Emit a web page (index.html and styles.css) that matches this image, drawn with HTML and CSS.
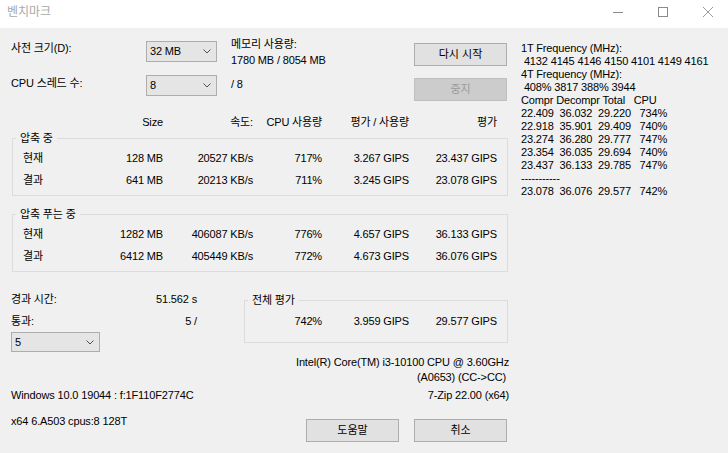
FILE: index.html
```html
<!DOCTYPE html>
<html lang="ko">
    <head>
        <meta charset="UTF-8" />
        <title>벤치마크</title>
        <link rel="stylesheet" href="styles.css">
    </head>
    <body>
        <div class="titlebar">
            <span class="title">벤치마크</span>
            <div class="controls">
                <span class="ctl"><svg width="10" height="10" viewBox="0 0 10 10"><path d="M0 5.5H10" stroke="#8a8a8a" stroke-width="1"/></svg></span>
                <span class="ctl"><svg width="10" height="10" viewBox="0 0 10 10"><rect x="0.5" y="0.5" width="9" height="9" fill="none" stroke="#8a8a8a" stroke-width="1"/></svg></span>
                <span class="ctl"><svg width="10" height="10" viewBox="0 0 10 10"><path d="M0 0L10 10M10 0L0 10" stroke="#9a9a9a" stroke-width="1"/></svg></span>
            </div>
        </div>

        <div class="dialog">
            <div class="main">
                <div class="settings">
                    <label class="lbl-dict">사전 크기(D):</label>
                    <div class="combo combo-dict">32 MB<svg width="8" height="5" viewBox="0 0 8 5"><path d="M0.5 0.5L4 4L7.5 0.5" fill="none" stroke="#505050"/></svg></div>
                    <div class="memory">메모리 사용량:<br>1780 MB / 8054 MB</div>
                    <button class="btn btn-top">다시 시작</button>

                    <label class="lbl-threads">CPU 스레드 수:</label>
                    <div class="combo">8<svg width="8" height="5" viewBox="0 0 8 5"><path d="M0.5 0.5L4 4L7.5 0.5" fill="none" stroke="#505050"/></svg></div>
                    <div class="threads">/ 8</div>
                    <button class="btn btn-stop" disabled>중지</button>
                </div>

                <div class="cols head">
                    <span></span>
                    <span>Size</span>
                    <span>속도:</span>
                    <span>CPU 사용량</span>
                    <span>평가 / 사용량</span>
                    <span>평가</span>
                </div>

                <fieldset class="group">
                    <legend>압축 중</legend>
                    <div class="cols row">
                        <span>현재</span><span>128 MB</span><span>20527 KB/s</span><span>717%</span><span>3.267 GIPS</span><span>23.437 GIPS</span>
                    </div>
                    <div class="cols row">
                        <span>결과</span><span>641 MB</span><span>20213 KB/s</span><span>711%</span><span>3.245 GIPS</span><span>23.078 GIPS</span>
                    </div>
                </fieldset>

                <fieldset class="group group-second">
                    <legend>압축 푸는 중</legend>
                    <div class="cols row">
                        <span>현재</span><span>1282 MB</span><span>406087 KB/s</span><span>776%</span><span>4.657 GIPS</span><span>36.133 GIPS</span>
                    </div>
                    <div class="cols row">
                        <span>결과</span><span>6412 MB</span><span>405449 KB/s</span><span>772%</span><span>4.673 GIPS</span><span>36.076 GIPS</span>
                    </div>
                </fieldset>

                <div class="summary">
                    <div class="passes">
                        <div class="stat"><span>경과 시간:</span><span>51.562 s</span></div>
                        <div class="stat"><span>통과:</span><span>5 /</span></div>
                        <div class="combo combo-pass">5<svg width="8" height="5" viewBox="0 0 8 5"><path d="M0.5 0.5L4 4L7.5 0.5" fill="none" stroke="#505050"/></svg></div>
                    </div>
                    <fieldset class="group group-total">
                        <legend>전체 평가</legend>
                        <div class="total-row">
                            <span>742%</span><span>3.959 GIPS</span><span>29.577 GIPS</span>
                        </div>
                    </fieldset>
                </div>

                <div class="cpu">
                    <div>Intel(R) Core(TM) i3-10100 CPU @ 3.60GHz</div>
                    <div class="cpu-id">(A0653) (CC-&gt;CC)</div>
                </div>

                <div class="foot">
                    <span>Windows 10.0 19044 : f:1F110F2774C</span>
                    <span>7-Zip 22.00 (x64)</span>
                </div>

                <div class="foot foot-last">
                    <span>x64 6.A503 cpus:8 128T</span>
                    <div class="buttons">
                        <button class="btn">도움말</button>
                        <button class="btn">취소</button>
                    </div>
                </div>
            </div>

<pre class="log">1T Frequency (MHz):
 4132 4145 4146 4150 4101 4149 4161
4T Frequency (MHz):
 408% 3817 388% 3944
Compr Decompr Total   CPU
22.409  36.032  29.220   734%
22.918  35.901  29.409   740%
23.274  36.280  29.777   747%
23.354  36.035  29.694   740%
23.437  36.133  29.785   747%
-----------
23.078  36.076  29.577   742%</pre>
        </div>
    </body>
</html>
```

FILE: styles.css
```css
* {
    box-sizing: border-box;
}

body {
    margin: 0;
    font-family: "Liberation Sans", "Noto Sans CJK KR", sans-serif;
    font-size: 11px;
    line-height: 13px;
    letter-spacing: -0.15px;
    color: #000;
    background-color: #f0f0f0;
    height: 453px;
    overflow: hidden;
}

/* title bar */
.titlebar {
    height: 28px;
    background-color: #fff;
    display: flex;
    justify-content: space-between;
    align-items: flex-start;
}

.title {
    padding: 4px 0 0 7px;
    font-size: 12px;
    line-height: 16px;
    letter-spacing: 0;
    color: #a8a8a8;
}

.controls {
    display: flex;
}

.ctl {
    width: 45px;
    height: 28px;
    padding: 7px 0 0 5px;
    display: flex;
    justify-content: center;
    align-items: flex-start;
}

/* dialog body */
.dialog {
    display: flex;
    gap: 12px;
    padding: 10px 0 0 11px;
}

.main {
    width: 498px;
    flex: none;
}

.settings {
    display: grid;
    grid-template-columns: 135px 71px 197px 93px;
    grid-template-rows: 28px 26px;
    row-gap: 9px;
    align-items: start;
}

.lbl-dict {
    margin-top: 4px;
}

.lbl-threads {
    margin-top: 2px;
}

.memory {
    margin-top: -2px;
    padding-left: 14px;
    line-height: 16px;
}

.threads {
    margin-top: 3px;
    padding-left: 14px;
}

.combo {
    height: 21px;
    border: 1px solid #adadad;
    background-color: #e5e5e5;
    padding: 0 5px 0 3px;
    display: flex;
    justify-content: space-between;
    align-items: center;
    line-height: 19px;
}

.combo-dict {
    margin-top: 3px;
}

.combo-pass {
    width: 89px;
    height: 20px;
}

.btn {
    font: inherit;
    line-height: 13px;
    height: 23px;
    width: 93px;
    padding: 0;
    border: 1px solid #adadad;
    background-color: #e1e1e1;
    color: #000;
}

.btn-top {
    margin-top: 5px;
}

.btn-stop {
    margin-top: 3px;
    background-color: #cccccc;
    border-color: #bfbfbf;
    color: #9a9a9a;
}

/* result table */
.cols {
    display: grid;
    grid-template-columns: 80px 60px 90px 69px 87px 88px;
    text-align: right;
}

.cols span:first-child {
    text-align: left;
}

.head {
    margin-top: 15px;
    padding: 0 12px;
}

.group {
    margin: 3px 1px 0;
    padding: 2px 10px 4px;
    border: 1px solid #dcdcdc;
    min-width: 0;
}

.group legend {
    margin-left: -7px;
    padding: 0 4px;
    line-height: 13px;
}

.group-second {
    margin-top: 12px;
}

.row {
    line-height: 22px;
}

/* summary */
.summary {
    display: grid;
    grid-template-columns: 186px 1fr;
    column-gap: 46px;
    align-items: start;
    margin-top: 16px;
}

.stat {
    display: flex;
    justify-content: space-between;
    line-height: 22px;
}

.group-total {
    margin-top: 6px;
    padding: 3px 10px 10px;
}

.total-row {
    display: grid;
    grid-template-columns: 1fr 87px 88px;
    text-align: right;
    line-height: 22px;
}

.cpu {
    margin-top: 3px;
    text-align: right;
    line-height: 15px;
}

.cpu-id {
    padding-right: 3px;
}

.foot {
    display: flex;
    justify-content: space-between;
    align-items: flex-start;
    margin-top: 4px;
}

.foot-last {
    margin-top: 13px;
}

.buttons {
    display: flex;
    gap: 15px;
    margin-top: 4px;
    padding-right: 2px;
}

/* benchmark log on the right */
.log {
    margin: 4px 0 0;
    font-family: "Liberation Sans", sans-serif;
    font-size: 11px;
    line-height: 13px;
    white-space: pre;
}
```
